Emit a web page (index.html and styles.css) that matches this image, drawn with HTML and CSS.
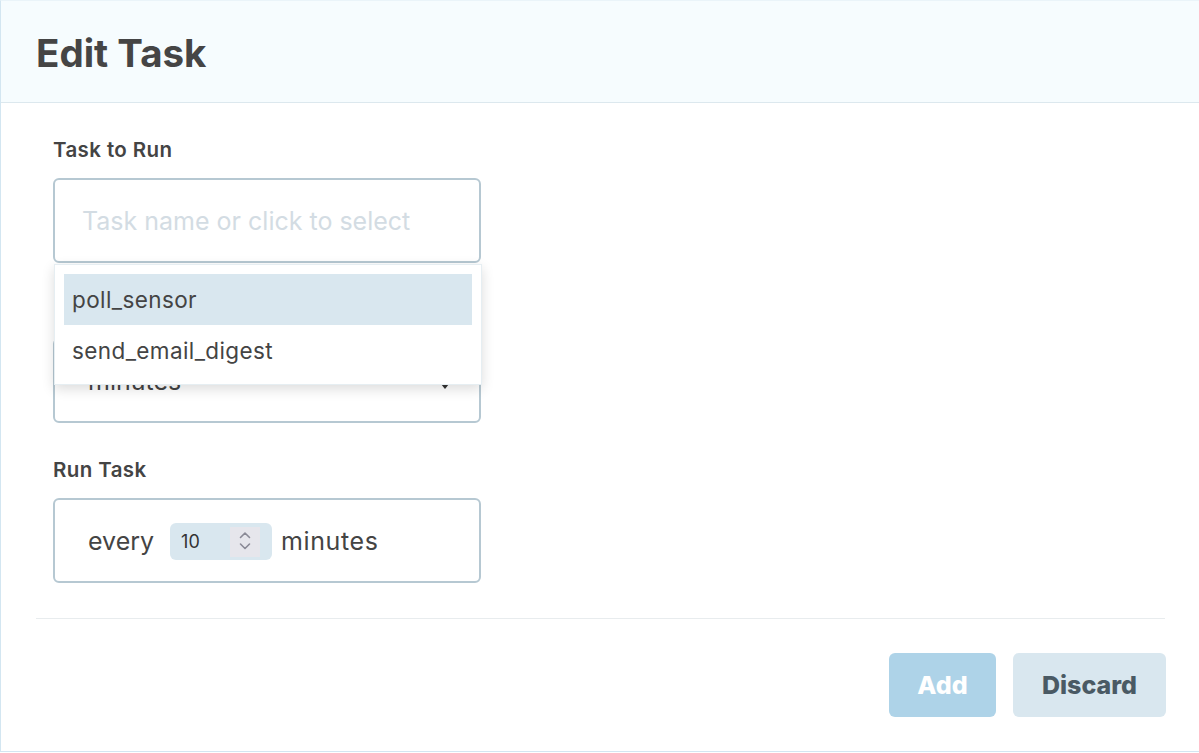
FILE: index.html
```html
<!DOCTYPE html>
<html>
<head>
<meta charset="utf-8">
<link rel="stylesheet" href="styles.css">
</head>
<body>
<div class="modal">
  <header class="modal-header">
    <h1 class="title">Edit Task</h1>
  </header>
  <div class="modal-body">
    <div class="fields">
      <div class="field field-task">
        <label class="label">Task to Run</label>
        <div class="box input-box">
          <span class="placeholder">Task name or click to select</span>
        </div>
        <ul class="menu">
          <li class="menu-item active">poll_sensor</li>
          <li class="menu-item">send_email_digest</li>
        </ul>
      </div>
      <div class="field">
        <div class="label" aria-hidden="true"></div>
        <div class="box select-box">
          <span class="select-value">minutes</span>
          <span class="select-arrow"></span>
        </div>
      </div>
      <div class="field">
        <label class="label">Run Task</label>
        <div class="box run-box">
          <span class="run-text">every</span>
          <div class="number">
            <span class="number-value">10</span>
            <span class="spinner">
              <svg width="30" height="30" viewBox="0 0 30 30"><path d="M10.5 10.5 L15 6 L19.5 10.5" fill="none" stroke="#8a8a96" stroke-width="1.6" stroke-linecap="round" stroke-linejoin="round"/><path d="M10.5 17 L15 21.5 L19.5 17" fill="none" stroke="#8a8a96" stroke-width="1.6" stroke-linecap="round" stroke-linejoin="round"/></svg>
            </span>
          </div>
          <span class="run-text run-unit">minutes</span>
        </div>
      </div>
    </div>
    <hr class="divider">
    <div class="actions">
      <button class="btn btn-add">Add</button>
      <button class="btn btn-discard">Discard</button>
    </div>
  </div>
</div>
</body>
</html>
```

FILE: styles.css
```css
* { box-sizing: border-box; }
html, body { margin: 0; padding: 0; background: #ffffff; overflow: hidden; }
body { font-family: "Inter", "Noto Sans", sans-serif; color: #444444; }

.modal {
  width: 1210px;
  height: 752px;
  border-left: 1px solid #d3e6f1;
  border-bottom: 1px solid #d3e6f1;
  border-top: 1px solid #eaf4f9;
  display: flex;
  flex-direction: column;
}

.modal-header {
  height: 102px;
  background: #f6fcfe;
  border-bottom: 1px solid #dce8ee;
  display: flex;
  align-items: center;
  padding-left: 35px;
}
.title {
  margin: 0;
  font-size: 38.5px;
  font-weight: 700;
  color: #454545;
  letter-spacing: 0;
  padding-top: 2px;
}

.modal-body {
  padding: 33px 0 0 35px;
  width: 1164px;
}
.fields { padding-left: 17px; }

.field { position: relative; width: 428px; margin-bottom: 33px; }
.field:last-child { margin-bottom: 35px; }

.label {
  display: block;
  height: 27px;
  line-height: 27px;
  font-size: 20.5px;
  font-weight: 600;
  letter-spacing: 0.4px;
  color: #444444;
  margin-bottom: 15px;
}

.box {
  height: 85px;
  border: 2px solid #b6c8d2;
  border-radius: 6px;
  background: #fff;
  display: flex;
  align-items: center;
}

.input-box { padding-left: 27px; }
.placeholder { font-size: 25px; color: #d3dce3; }

.menu {
  position: absolute;
  top: 128px;
  left: 1px;
  width: 428px;
  height: 121px;
  margin: 0;
  padding: 9px;
  list-style: none;
  background: #ffffff;
  border: 1px solid #e6eef2;
  box-shadow: 0 4px 12px rgba(0,0,0,0.14);
  z-index: 2;
}
.menu-item {
  height: 51px;
  display: flex;
  align-items: center;
  padding-left: 8px;
  font-size: 22.5px;
  letter-spacing: 0.4px;
  color: #444444;
}
.menu-item.active { background: #d9e7ef; }

.select-box { position: relative; padding-left: 33px; }
.select-value { font-size: 25px; color: #444; }
.select-arrow {
  position: absolute;
  right: 30px;
  top: 44px;
  width: 0; height: 0;
  border-left: 4px solid transparent;
  border-right: 4px solid transparent;
  border-top: 5px solid #333;
}

.run-box { padding-left: 33px; }
.run-text { font-size: 25px; color: #444444; }
.run-unit { letter-spacing: 0.6px; }
.number {
  width: 102px;
  height: 37px;
  margin: 2px 9px 0 16px;
  background: #d9e7ef;
  border-radius: 6px;
  display: flex;
  align-items: center;
  justify-content: space-between;
  padding: 0 12px 0 11px;
}
.number-value { font-size: 18px; color: #333; }
.spinner {
  width: 30px;
  height: 30px;
  background: #e6e6ec;
  display: flex;
}

.divider {
  margin: 0;
  border: 0;
  border-top: 1px solid #e8ecee;
  width: 1129px;
}

.actions {
  display: flex;
  justify-content: flex-end;
  gap: 17px;
  width: 1130px;
  padding-top: 34px;
}
.btn {
  height: 64px;
  border: 0;
  border-radius: 6px;
  font-family: inherit;
  font-size: 25px;
  font-weight: 800;
}
.btn-add { width: 107px; background: #aed3e8; color: #ffffff; }
.btn-discard { width: 153px; background: #d9e7ef; color: #4a5a64; }
```
